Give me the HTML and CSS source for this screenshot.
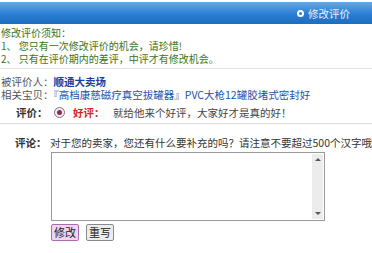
FILE: index.html
```html
<!DOCTYPE html>
<html lang="zh-CN">
<head>
  <meta charset="UTF-8">
  <title>修改评价</title>
  <link rel="stylesheet" href="styles.css">
</head>
<body>
  <div class="title-bar">
    <span class="title-dot"></span>
    <span class="title-text">修改评价</span>
  </div>

  <div class="notice">
    <p>修改评价须知：</p>
    <p>1、 您只有一次修改评价的机会，请珍惜!</p>
    <p>2、 只有在评价期内的差评，中评才有修改机会。</p>
  </div>

  <div class="info">
    <p><span class="label">被评价人：</span><a class="seller" href="#">顺通大卖场</a></p>
    <p><span class="label">相关宝贝：</span><a class="item" href="#">『高档康慈磁疗真空拔罐器』PVC大枪12罐胶堵式密封好</a></p>
    <div class="rate-row">
      <span class="rate-label">评价：</span>
      <span class="radio"><span class="radio-dot"></span></span>
      <span class="rate-good">好评：</span>
      <span class="rate-text">就给他来个好评，大家好才是真的好！</span>
    </div>
  </div>

  <div class="comment">
    <span class="comment-label">评论：</span>
    <div class="comment-body">
      <p class="comment-hint">对于您的卖家，您还有什么要补充的吗？请注意不要超过500个汉字哦</p>
      <div class="textbox">
        <textarea class="comment-input"></textarea>
        <div class="scroll">
          <span class="arrow-up"></span>
          <span class="arrow-down"></span>
        </div>
      </div>
      <div class="actions">
        <button class="btn btn-submit">修改</button>
        <button class="btn btn-reset">重写</button>
      </div>
    </div>
  </div>
</body>
</html>
```

FILE: styles.css
```css
body {
  margin: 0;
  font-family: "Noto Sans CJK SC", "DejaVu Sans", sans-serif;
  font-size: 10.5px;
  color: #333;
  background: #fff;
}

p {
  margin: 0;
}

a {
  text-decoration: none;
}

.title-bar {
  margin-top: 2px;
  height: 22px;
  background: linear-gradient(#62a9e8, #2a7ed2 55%, #1d6cc0);
  display: flex;
  align-items: center;
  justify-content: flex-end;
  padding-right: 22px;
  color: #e8f2fc;
}

.title-dot {
  width: 7px;
  height: 7px;
  border-radius: 50%;
  background: #2a7ed2;
  box-sizing: border-box;
  border: 2px solid #fff;
  margin-right: 4px;
}

.notice {
  padding: 2px 1px 3px;
  font-size: 10px;
  line-height: 13px;
  color: #3b7424;
  border-bottom: 1px solid #e2e2e2;
}

.info {
  padding: 6px 1px 0;
  line-height: 13px;
  border-bottom: 1px solid #dcdcdc;
}

.label {
  color: #555;
}

.seller {
  color: #1c3d9e;
  font-weight: bold;
}

.item {
  color: #2552ad;
}

.rate-row {
  display: flex;
  align-items: center;
  height: 22px;
  padding-left: 15px;
}

.rate-label {
  font-weight: bold;
  width: 38px;
}

.radio {
  width: 9px;
  height: 9px;
  border-radius: 50%;
  border: 1px solid #8a6a8a;
  background: #f4eef4;
  display: flex;
  align-items: center;
  justify-content: center;
  margin-right: 8px;
}

.radio-dot {
  width: 5px;
  height: 5px;
  border-radius: 50%;
  background: #8a2a5a;
}

.rate-good {
  color: #d4281e;
  font-weight: bold;
  width: 40px;
}

.rate-text {
  color: #444;
}

.comment {
  display: flex;
  padding: 12px 0 0 15px;
  line-height: 13px;
}

.comment-label {
  font-weight: bold;
  width: 35px;
  flex: none;
}

.comment-body {
  display: flex;
  flex-direction: column;
  white-space: nowrap;
}

.textbox {
  display: flex;
  width: 274px;
  height: 69px;
  margin: 3px 0 0 1px;
  border: 1px solid #999;
  box-sizing: border-box;
}

.comment-input {
  flex: 1;
  border: none;
  resize: none;
  outline: none;
  margin: 0;
  padding: 2px;
}

.scroll {
  width: 11px;
  margin: 1px 1px 1px 0;
  background: #ececec;
  display: flex;
  flex-direction: column;
  justify-content: space-between;
  align-items: center;
  padding: 4px 0;
}

.arrow-up,
.arrow-down {
  width: 0;
  height: 0;
  border-left: 3px solid transparent;
  border-right: 3px solid transparent;
}

.arrow-up {
  border-bottom: 3px solid #555;
}

.arrow-down {
  border-top: 3px solid #555;
}

.actions {
  display: flex;
  gap: 7px;
  margin: 3px 0 0 1px;
}

.btn {
  font-family: inherit;
  font-size: 11px;
  line-height: 13px;
  padding: 1px 2px;
  height: 17px;
  border-radius: 2px;
  color: #222;
}

.btn-submit {
  background: #f1d4ee;
  border: 1px solid #b068b0;
}

.btn-reset {
  background: #ececec;
  border: 1px solid #8a8a8a;
}
```
